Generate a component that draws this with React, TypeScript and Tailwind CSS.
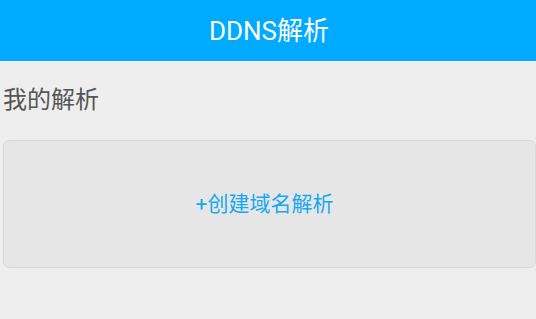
export default function App() {
  return (
    <div
      className="min-h-[319px] w-full bg-[#eeeeee]"
      style={{ fontFamily: 'Roboto, "Noto Sans CJK SC", sans-serif' }}
    >
      {/* Title bar */}
      <div className="flex h-[61px] items-center justify-center bg-[#00aaff]">
        <h1 className="pl-[2px] text-[26px] leading-none text-white">DDNS解析</h1>
      </div>

      {/* Section label */}
      <p className="mt-[27px] pl-[3px] text-[24px] leading-[24px] text-[#555555]">我的解析</p>

      {/* Create button card */}
      <div className="mt-[28px] ml-[3px] flex h-[128px] items-center justify-center rounded-[6px] border border-[#dadada] bg-[#e6e6e6] pr-[10px]">
        <span className="text-[21px] leading-none text-[#17a8f2]">+创建域名解析</span>
      </div>
    </div>
  )
}
